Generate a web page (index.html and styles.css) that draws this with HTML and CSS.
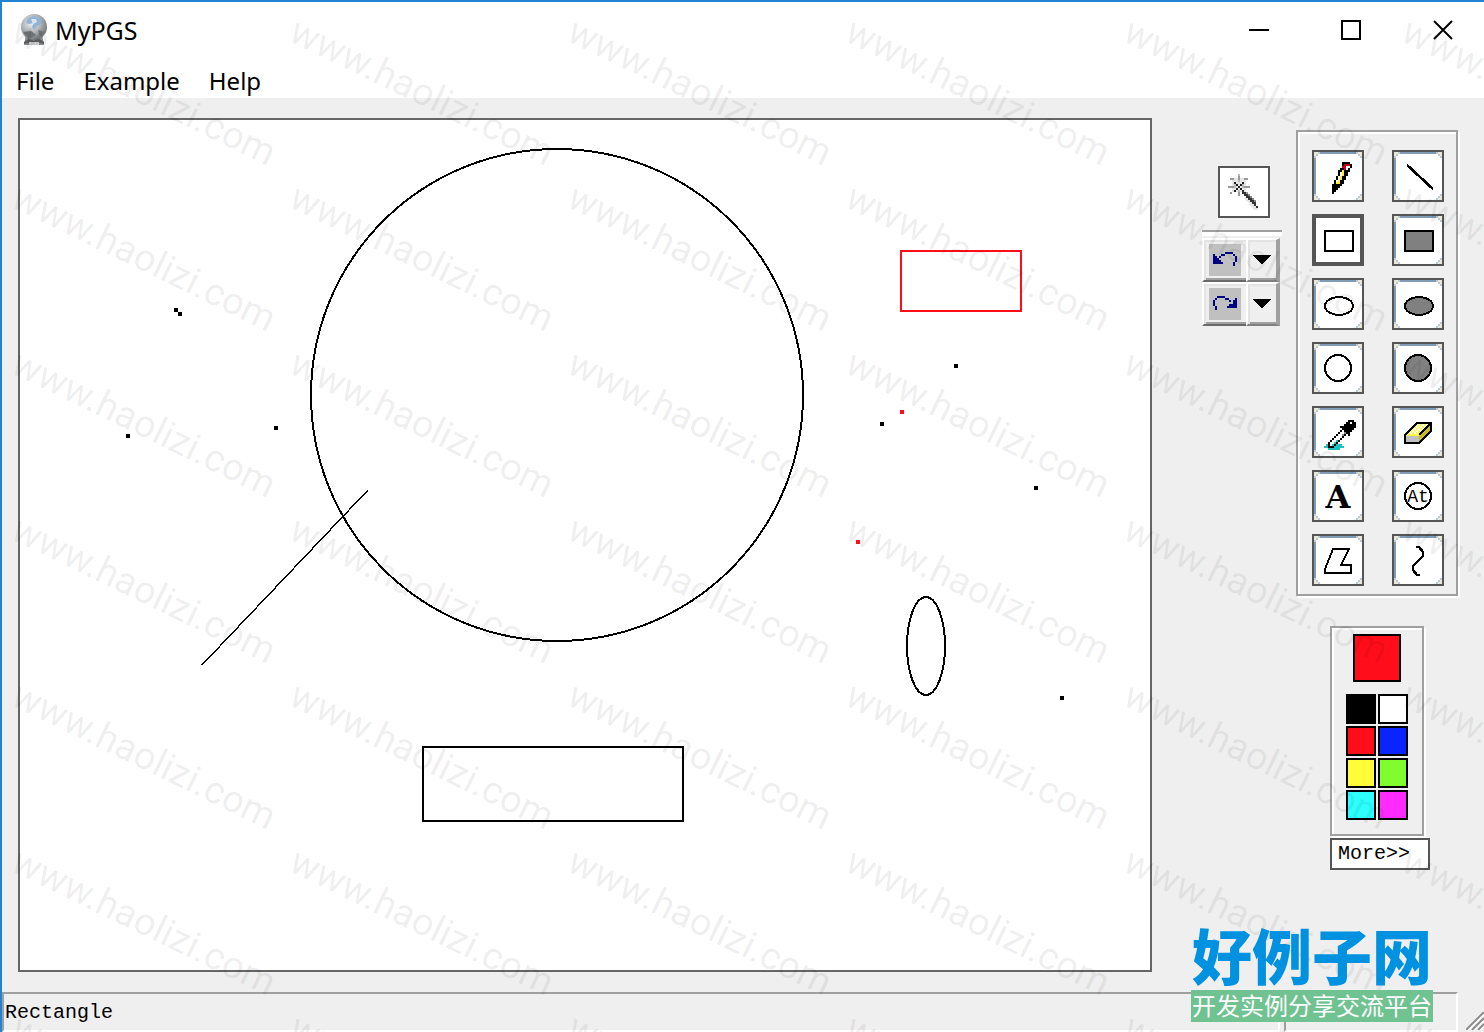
FILE: index.html
```html
<!DOCTYPE html>
<html lang="en">
  <head>
    <meta charset="UTF-8" />
    <meta name="viewport" content="width=device-width, initial-scale=1.0" />
    <title>MyPGS</title>
    <link rel="stylesheet" href="styles.css">
  </head>
  <body>
    <!-- Shared frame of the tool buttons -->
    <svg class="defs" aria-hidden="true">
      <symbol id="frame" viewBox="0 0 24 24">
        <path fill="#7f9db9" d="M2 0h20v1H2zM0 2h1v20H0z" />
        <path fill="#b9cad9" d="M1 1h1v1H1zM2 0h1v1H2zM0 2h1v1H0zM21 0h1v1h-1zM22 1h1v1h-1zM23 2h1v1h-1zM0 21h1v1H0zM1 22h1v1H1zM2 23h1v1H2zM21 23h1v1h-1zM22 22h1v1h-1zM23 21h1v1h-1z" />
        <path fill="#ece9d8" d="M0 0h2v1H1v1H0zM22 0h2v2h-1V1h-1zM0 22h1v1h1v1H0zM23 22h1v2h-2v-1h1z" />
      </symbol>
    </svg>

    <header class="titlebar">
      <svg class="app-icon" viewBox="0 0 28 32" aria-hidden="true">
        <defs>
          <radialGradient id="globe" cx="0.4" cy="0.35" r="0.7">
            <stop offset="0" stop-color="#eef2f5" />
            <stop offset="0.5" stop-color="#b2b5b7" />
            <stop offset="1" stop-color="#6b6e70" />
          </radialGradient>
        </defs>
        <path fill="#8b8d8e" d="M6 20h16l2 11H4z" />
        <path fill="#5a5b5c" d="M4 28l6-4 4 3 4-3 6 4v2l-4-1H8l-4 1z" />
        <path fill="#c8cacb" d="M9 28h10v3H9z" />
        <circle cx="14" cy="13" r="13" fill="url(#globe)" />
        <path fill="#8fb4d8" d="M8 4l6-2 7 3v5l-4 2-3 4-2-3 2-4-5 1-3-1z" />
        <path fill="#dce5ee" d="M11 5h5l1 3-4 2z" />
        <path fill="#6e7071" d="M3 18l8-1 5 4-7 4zM18 16l7 2-5 5z" />
      </svg>
      <h1 class="title">MyPGS</h1>
      <div class="window-controls">
        <button class="window-btn" aria-label="Minimize">
          <svg viewBox="0 0 20 20"><path d="M0 10h20" /></svg>
        </button>
        <button class="window-btn" aria-label="Maximize">
          <svg viewBox="0 0 20 20"><rect x="1" y="1" width="18" height="18" /></svg>
        </button>
        <button class="window-btn close" aria-label="Close">
          <svg viewBox="0 0 20 20"><path d="M1 1l18 18M19 1L1 19" /></svg>
        </button>
      </div>
    </header>

    <nav class="menu">
      <button>File</button>
      <button>Example</button>
      <button>Help</button>
    </nav>

    <main class="workspace">
      <!-- Drawing area -->
      <div class="board">
        <svg class="drawing" role="img" aria-label="Drawing">
          <ellipse cx="537" cy="275" rx="246" ry="246" />
          <ellipse cx="906" cy="526" rx="19" ry="49" />
          <rect x="403" y="627" width="260" height="74" />
          <rect class="red" x="881" y="131" width="120" height="60" />
          <path class="thin" d="M348 370L182 545" />
          <path class="dot" d="M154 188h4v4h-4zM158 192h4v4h-4zM106 314h4v4h-4zM254 306h4v4h-4zM934 244h4v4h-4zM860 302h4v4h-4zM1014 366h4v4h-4zM1040 576h4v4h-4z" />
          <path class="dot red-dot" d="M880 290h4v4h-4zM836 420h4v4h-4z" />
        </svg>
      </div>

      <!-- Wand, undo and redo -->
      <div class="history">
        <button class="tool wand" aria-label="Magic wand">
          <svg viewBox="0 0 24 24">
            <path fill="#e6e6e6" d="M6 5h7v7H6zM13 14l6 6v1h-2l-5-6z" />
            <path fill="#999" d="M9 4h1v2H9zM9 12h1v2H9zM4 9h3v1H4zM12 9h3v1h-3zM5 5h2v1H5zM12 5h2v1h-2zM5 12h1v1H5zM12 12h2v1h-2z" />
            <path fill="#bbb" d="M9 3h1v1H9zM7 8h1v2H7zM11 8h1v2h-1zM9 6h1v1H9zM9 11h1v1H9z" />
            <path fill="#222" d="M7 7h1v1H7zM8 8h1v1H8zM9 9h1v1H9zM10 8h1v1h-1zM11 7h1v1h-1zM8 10h1v1H8zM10 10h1v1h-1zM7 11h1v1H7z" />
            <path fill="#333" d="M11 11h1v1h1v1h1v1h1v1h1v1h1v1h1v2h1v1h-1v-1h-1v-1h-1v-1h-1v-1h-1v-1h-1v-1h-1v-1h-1z" />
            <path fill="#888" d="M14 13h1v1h-1zM15 14h1v1h-1zM16 15h1v1h-1zM17 16h1v1h-1z" />
          </svg>
        </button>
        <hr>
        <div class="history-row">
          <button class="step" aria-label="Undo">
            <svg viewBox="0 0 16 16">
              <path fill="#000080" d="M2 5h1v1h1v1h1v1h1v1h1v1H2zM5 6h1v1H5zM6 5h2v1H6zM8 4h4v1H8zM12 5h1v1h-1zM13 6h1v3h-1zM12 9h1v2h-1zM4 7h1v1H4z" />
            </svg>
          </button>
          <button class="drop" aria-label="Undo list">
            <svg viewBox="0 0 18 10"><path d="M0 0h18l-9 10z" /></svg>
          </button>
        </div>
        <div class="history-row">
          <button class="step" aria-label="Redo">
            <svg viewBox="0 0 16 16">
              <path fill="#000080" d="M14 5h-1v1h-1v1h-1v1h-1v1H9v1h5zM10 6h1v1h-1zM8 5h2v1H8zM4 4h4v1H4zM3 5h1v1H3zM2 6h1v3H2zM3 9h1v2H3zM11 7h1v1h-1z" />
            </svg>
          </button>
          <button class="drop" aria-label="Redo list">
            <svg viewBox="0 0 18 10"><path d="M0 0h18l-9 10z" /></svg>
          </button>
        </div>
      </div>

      <div class="side">
        <div class="tools">
          <button class="tool" aria-label="Pencil">
            <svg viewBox="0 0 24 24">
              <use href="#frame" />
              <path d="M14 5h4v1h1v2h-1v2h-1v2h-1v2h-1v2h-1v1h-1v1h-1v1h-1v1h-1v1H9v-5h1v-2h1v-2h1V9h1V8h1z" />
              <path fill="#c00018" d="M15 6h3v1h-2v2h-1V8h-1V7h1z" />
              <path fill="#fff" d="M16 7h2v1h-1v1h-1zM13 10h1v2h-1zM12 12h1v2h-1zM11 14h1v1h-1z" />
              <path fill="#ffee2e" d="M14 9h1v3h-1v2h-1v2h-2v-1h1v-1h1v-2h1z" />
            </svg>
          </button>
          <button class="tool" aria-label="Line">
            <svg viewBox="0 0 24 24"><use href="#frame" /><path class="line thick" d="M6.500 6.500l13 12" /></svg>
          </button>
          <button class="tool selected" aria-label="Rectangle" aria-pressed="true">
            <svg viewBox="0 0 24 24"><rect class="line" x="5.500" y="7.500" width="14" height="10" /></svg>
          </button>
          <button class="tool" aria-label="Filled rectangle">
            <svg viewBox="0 0 24 24"><use href="#frame" /><rect class="line fill" x="5.500" y="7.500" width="14" height="10" /></svg>
          </button>
          <button class="tool" aria-label="Ellipse">
            <svg viewBox="0 0 24 24"><use href="#frame" /><ellipse class="line" cx="12.500" cy="13" rx="7" ry="4.500" /></svg>
          </button>
          <button class="tool" aria-label="Filled ellipse">
            <svg viewBox="0 0 24 24"><use href="#frame" /><ellipse class="line fill" cx="12.500" cy="13" rx="7" ry="4.500" /></svg>
          </button>
          <button class="tool" aria-label="Circle">
            <svg viewBox="0 0 24 24"><use href="#frame" /><circle class="line" cx="12" cy="12" r="6.500" /></svg>
          </button>
          <button class="tool" aria-label="Filled circle">
            <svg viewBox="0 0 24 24"><use href="#frame" /><circle class="line fill" cx="12" cy="12" r="6.500" /></svg>
          </button>
          <button class="tool" aria-label="Color picker">
            <svg viewBox="0 0 24 24">
              <use href="#frame" />
              <path fill="#1fc0c0" d="M6 18h8v1h1v1h-2v1H7v-1H5v-1h1z" />
              <path d="M17 6h3v1h1v3h-1v1h-1v1h-1v2h-1v-1h-1v1h-1v1h-1v1h-1v1h-1v1h-1v1h-1v1H7v-3h1v-1h1v-1h1v-1h1v-1h1v-1h1v-1h1v-1h-1V9h2V8h1V7h1z" />
              <path fill="#fff" d="M14 11h1v1h1v1h-1v1h-1v1h-1v1h-1v1h-1v1h-1v1H8v-2h1v-1h1v-1h1v-1h1v-1h1v-1h1zM18 7h1v1h-1z" />
              <path fill="#1fc0c0" d="M11 16h1v1h-1v1h-1v1H9v-1h1v-1h1z" />
              <path fill="#888" d="M15 12h1v1h-1zM14 13h1v1h-1z" />
            </svg>
          </button>
          <button class="tool" aria-label="Eraser">
            <svg viewBox="0 0 24 24">
              <use href="#frame" />
              <path fill="#fff84a" d="M11.500 7.500h7l-6 6.500h-7z" />
              <path fill="#fff" d="M12 8h1v1h-1zM14 8h1v1h-1zM16 8h1v1h-1zM11 9h1v1h-1zM13 9h1v1h-1zM15 9h1v1h-1zM10 10h1v1h-1zM12 10h1v1h-1zM14 10h1v1h-1zM9 11h1v1H9zM11 11h1v1h-1zM13 11h1v1h-1zM8 12h1v1H8zM10 12h1v1h-1z" />
              <path fill="#c8bd1e" d="M18.500 7.500v4l-6 6v-4z" />
              <path fill="#c0c0c0" d="M5.500 14h7v3.500h-7z" />
              <path class="line" d="M11.500 7.500h7v4l-6 6h-7v-4zM12.500 13.500l6-6" />
            </svg>
          </button>
          <button class="tool" aria-label="Text">
            <svg viewBox="0 0 24 24"><use href="#frame" /><text class="letter" x="12" y="18">A</text></svg>
          </button>
          <button class="tool" aria-label="Circled text">
            <svg viewBox="0 0 24 24">
              <use href="#frame" />
              <circle class="line" cx="12" cy="12" r="6.500" />
              <text class="letters" x="12" y="15">At</text>
            </svg>
          </button>
          <button class="tool" aria-label="Polygon">
            <svg viewBox="0 0 24 24"><use href="#frame" /><path class="line" d="M9.500 6.500h8l-4 8h5v4h-13v-2z" /></svg>
          </button>
          <button class="tool" aria-label="Curve">
            <svg viewBox="0 0 24 24"><use href="#frame" /><path class="line thick" d="M11 5.500h1.500l2 2.500v2l-5 5v2l2 2.500h1.500" /></svg>
          </button>
        </div>

        <div class="palette">
          <button class="swatch current red" aria-label="Current color"></button>
          <div class="swatches">
            <button class="swatch black" aria-label="Black"></button>
            <button class="swatch white" aria-label="White"></button>
            <button class="swatch red" aria-label="Red"></button>
            <button class="swatch blue" aria-label="Blue"></button>
            <button class="swatch yellow" aria-label="Yellow"></button>
            <button class="swatch green" aria-label="Green"></button>
            <button class="swatch cyan" aria-label="Cyan"></button>
            <button class="swatch magenta" aria-label="Magenta"></button>
          </div>
        </div>
        <button class="more">More&gt;&gt;</button>
      </div>
    </main>

    <footer class="statusbar">
      <div class="status-cell">Rectangle</div>
      <div class="status-cell small"></div>
      <svg class="grip" viewBox="0 0 18 18" aria-hidden="true">
        <path stroke="#fff" d="M2 18L18 2M8 18L18 8M14 18l4-4" />
        <path stroke="#8c8c8c" d="M0 18L18 0M6 18L18 6M12 18l6-6" />
      </svg>
    </footer>

    <div class="watermark" id="watermark" aria-hidden="true"></div>

    <div class="brand">
      <div class="brand-name" lang="zh-CN">好例子网</div>
      <div class="brand-tag" lang="zh-CN">开发实例分享交流平台</div>
    </div>

    <script>
      // Fill the overlay with the repeated site name
      const watermark = document.getElementById("watermark");
      for (let i = 0; i < 42; i++) {
        const mark = document.createElement("span");
        mark.textContent = "www.haolizi.com";
        watermark.appendChild(mark);
      }
    </script>
  </body>
</html>
```
FILE: styles.css
```css
* {
  box-sizing: border-box;
}
body {
  position: relative;
  display: flex;
  flex-direction: column;
  min-height: 100vh;
  margin: 0;
  border-top: 2px solid #2283d5;
  border-left: 2px solid #2283d5;
  background: #efefef;
  color: #000;
  font-family: "Noto Sans", sans-serif;
  font-size: 24px;
  overflow: hidden;
}
button {
  padding: 0;
  border: none;
  background: none;
  color: inherit;
  font: inherit;
  cursor: pointer;
}
svg {
  display: block;
}
.defs {
  position: absolute;
  width: 0;
  height: 0;
}

/* Title bar and menu */
.titlebar {
  display: flex;
  align-items: center;
  height: 58px;
  padding: 0 15px 2px 18px;
  background: #fff;
}
.app-icon {
  width: 28px;
  height: 32px;
  margin-right: 7px;
}
.title {
  flex: 1;
  margin: 0;
  font-size: 25px;
  font-weight: normal;
}
.window-controls {
  display: flex;
  gap: 40px;
}
.window-btn {
  display: flex;
  justify-content: center;
  width: 52px;
  padding: 16px 0;
}
.window-btn svg {
  width: 20px;
  height: 20px;
  fill: none;
  stroke: #000;
  stroke-width: 2;
}
.menu {
  display: flex;
  align-items: center;
  gap: 29px;
  height: 38px;
  padding: 4px 0 0 14px;
  background: #fff;
}
.menu button {
  line-height: 34px;
}

/* Work area */
.workspace {
  display: flex;
  flex: 1;
  align-items: flex-start;
  padding: 20px 26px 20px 16px;
}
.board {
  flex: 1;
  align-self: stretch;
  display: flex;
  margin-right: 50px;
  border: 2px solid #666;
  background: #fff;
}
.drawing {
  flex: 1;
  width: 100%;
  fill: none;
  stroke: #000;
  stroke-width: 2;
  shape-rendering: crispEdges;
}
.drawing .thin {
  stroke-width: 1.4;
}
.drawing .red {
  stroke: #ff0d1a;
}
.drawing .dot {
  fill: #000;
  stroke: none;
}
.drawing .red-dot {
  fill: #ff0d1a;
}

/* Tool buttons */
.tool {
  display: flex;
  align-items: center;
  justify-content: center;
  width: 52px;
  height: 52px;
  border: 2px solid #555;
  background: #fff;
}
.tool.selected {
  border-width: 4px;
}
.tool svg {
  flex-shrink: 0;
  width: 48px;
  height: 48px;
  shape-rendering: crispEdges;
}
.tool .line {
  fill: none;
  stroke: #000;
}
.tool .thick {
  stroke-width: 1.3;
}
.tool .fill {
  fill: #808080;
}
.letter {
  font: bold 16px "DejaVu Serif", serif;
  text-anchor: middle;
}
.letters {
  font: 9px "Liberation Mono", monospace;
  text-anchor: middle;
}

/* Undo and redo */
.history {
  width: 80px;
  margin-right: 14px;
  padding-top: 48px;
}
.wand {
  margin-left: 16px;
}
.history hr {
  height: 6px;
  margin: 12px 0 2px;
  border: none;
  border-top: 2px solid #a0a0a0;
  background: #fff;
}
.history-row {
  display: flex;
  width: 78px;
  height: 44px;
}
.step {
  display: flex;
  align-items: center;
  justify-content: center;
  width: 44px;
  border-top: 2px solid #fff;
  border-left: 2px solid #fff;
  border-bottom: 2px solid #696969;
  box-shadow: inset 2px 2px #e3e3e3, inset 0 -2px #a0a0a0;
}
.step svg {
  width: 32px;
  height: 32px;
  background: #c0c0c0;
  shape-rendering: crispEdges;
}
.drop {
  display: flex;
  align-items: center;
  justify-content: center;
  width: 34px;
  border: 2px solid #fff;
  border-right: 4px solid #a0a0a0;
  border-bottom-color: #808080;
  box-shadow: inset 2px 2px #e3e3e3, inset 0 -2px #a0a0a0;
}
.drop svg {
  width: 18px;
  height: 10px;
  shape-rendering: crispEdges;
}

/* Tools and colors */
.side {
  width: 162px;
  padding-top: 12px;
}
.tools {
  display: grid;
  grid-template-columns: 52px 52px;
  gap: 12px 28px;
  padding: 18px 12px 8px 14px;
}
.tools,
.palette {
  border: 2px solid #a0a0a0;
  box-shadow: inset 2px 2px #fff, 2px 2px #fff;
}
.palette {
  display: flex;
  flex-direction: column;
  align-items: center;
  gap: 12px;
  width: 94px;
  margin: 30px 0 2px 34px;
  padding: 6px 0 14px;
}
.swatches {
  display: grid;
  grid-template-columns: 30px 30px;
  gap: 2px;
}
.swatch {
  height: 30px;
  border: 2px solid #000;
}
.swatch.current {
  width: 48px;
  height: 48px;
}
.swatch.black {
  background: #000;
}
.swatch.white {
  background: #fff;
}
.swatch.red {
  background: #ff0d1a;
}
.swatch.blue {
  background: #0a24ff;
}
.swatch.yellow {
  background: #fffd38;
}
.swatch.green {
  background: #80fd2d;
}
.swatch.cyan {
  background: #2cfffe;
}
.swatch.magenta {
  background: #ff2bff;
}
.more {
  display: block;
  width: 100px;
  height: 32px;
  margin-left: 34px;
  padding-left: 6px;
  border: 2px solid #555;
  background: #fff;
  font: 20px/28px "Liberation Mono", monospace;
  text-align: left;
}

/* Status bar */
.statusbar {
  display: flex;
  gap: 4px;
  height: 40px;
}
.status-cell {
  flex: 1;
  padding-left: 1px;
  border: 2px solid #a0a0a0;
  border-right-color: #fff;
  border-bottom-color: #fff;
  font: 20px/38px "Liberation Mono", monospace;
}
.status-cell.small {
  flex: 0 0 174px;
}
.grip {
  align-self: flex-end;
  width: 18px;
  height: 18px;
  margin: 0 0 2px 4px;
  stroke-width: 2;
}

/* Overlays */
.watermark {
  position: absolute;
  inset: 0;
  display: grid;
  grid-template-columns: repeat(6, 278px);
  grid-auto-rows: 166px;
  overflow: hidden;
  pointer-events: none;
  color: rgba(0, 0, 0, 0.07);
  font: 38px/36px Roboto, sans-serif;
}
.watermark span {
  padding-left: 23px;
  transform: rotate(26deg);
  transform-origin: 0 0;
  white-space: nowrap;
}
.brand {
  position: absolute;
  right: 51px;
  bottom: 10px;
  width: 242px;
  font-family: "Noto Sans CJK SC", sans-serif;
  text-align: center;
  white-space: nowrap;
}
.brand-name {
  padding-bottom: 4px;
  color: #0092e0;
  font-size: 60px;
  font-weight: 900;
  line-height: 64px;
}
.brand-tag {
  padding-bottom: 2px;
  background: #70c291;
  color: #fff;
  font-size: 24px;
  line-height: 30px;
}
```
